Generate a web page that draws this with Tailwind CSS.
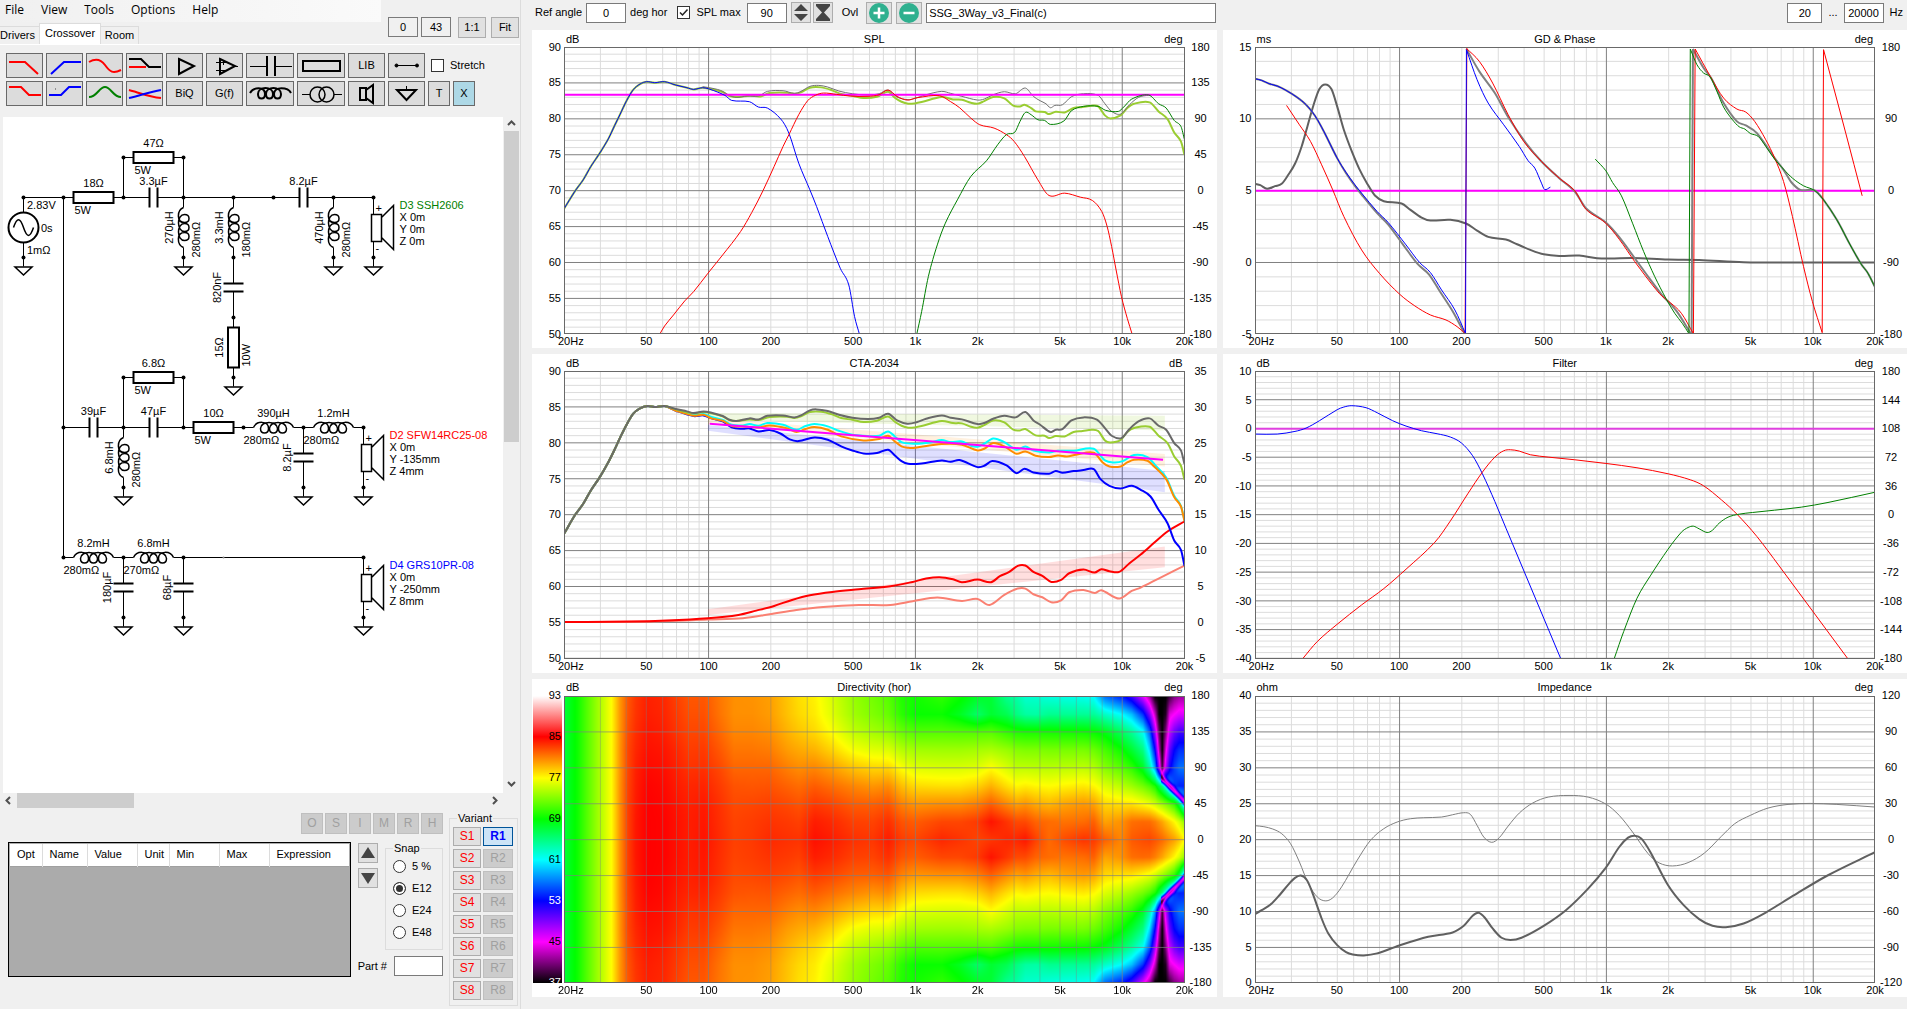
<!DOCTYPE html>
<html lang="en">
<head>
    <meta charset="UTF-8">
    <meta name="viewport" content="width=device-width, initial-scale=1.0">
    <title>Crossover designer</title>
    <script src="https://cdn.jsdelivr.net/npm/@tailwindcss/browser@4"></script>
</head>
<body class="flex h-screen overflow-hidden bg-[#f0f0f0] font-['Liberation_Sans',sans-serif] text-[11px] leading-[13px] text-black">

    <!-- Left panel: menu, schematic editor, part list -->
    <aside class="flex w-[521px] shrink-0 flex-col border-r border-[#dcdcdc]">
        <div class="flex h-11 shrink-0 justify-between">
            <div class="flex w-[381px] flex-col">
                <nav class="flex h-[22px] gap-[17px] bg-linear-to-r from-[#f0f0f0] to-[#fafafa] pt-[2px] pl-[5px] font-['Open_Sans',sans-serif] text-[12px] leading-4">
                    <a href="#">File</a>
                    <a href="#">View</a>
                    <a href="#">Tools</a>
                    <a href="#">Options</a>
                    <a href="#">Help</a>
                </nav>
                <div class="flex flex-1 items-end">
                    <button class="h-[18px] w-[39px] border-t border-[#dcdcdc] pr-1">Drivers</button>
                    <button class="h-[21px] w-[62px] border border-b-0 border-[#dcdcdc] bg-white pb-[2px]">Crossover</button>
                    <button class="h-[18px] w-[38px] border-t border-r border-[#dcdcdc]">Room</button>
                </div>
            </div>
            <div class="flex items-start gap-[3px] pt-[17px] pr-px">
                <input aria-label="X offset" value="0" class="h-5 w-[30px] border border-[#7a7a7a] bg-[#f0f0f0] text-center">
                <input aria-label="Y offset" value="43" class="h-5 w-[30px] border border-[#7a7a7a] bg-[#f0f0f0] text-center">
                <button class="ml-1 h-[21px] w-7 border border-[#adadad] bg-[#e1e1e1]">1:1</button>
                <button class="ml-[2px] h-[21px] w-7 border border-[#adadad] bg-[#e1e1e1]">Fit</button>
            </div>
        </div>

        <div class="flex shrink-0 flex-col gap-[3px] border-t border-white pt-2 pb-[11px] pl-[6px]">
            <div class="flex gap-[3px]">
                <button aria-label="Low pass" class="h-[25px] w-[37px] border border-[#696969] bg-[#dcdcdc]"><svg width="35" height="23" fill="none" stroke="red" stroke-width="2"><path d="M2 8H18L31 20"/></svg></button>
                <button aria-label="High pass" class="h-[25px] w-[37px] border border-[#696969] bg-[#dcdcdc]"><svg width="35" height="23" fill="none" stroke="#00f" stroke-width="2"><path d="M4 20L17 8H34"/></svg></button>
                <button aria-label="All pass" class="h-[25px] w-[37px] border border-[#696969] bg-[#dcdcdc]"><svg width="35" height="23" fill="none" stroke="red" stroke-width="2"><path d="M2 8C7 5 13 4 18 11S26 20 34 16"/></svg></button>
                <button aria-label="Shelf" class="h-[25px] w-[37px] border border-[#696969] bg-[#dcdcdc]"><svg width="35" height="23" fill="none" stroke-width="2"><path d="M2 13H19" stroke="red"/><path d="M2 5H14L22 13H34" stroke="#000"/></svg></button>
                <button aria-label="Buffer" class="h-[25px] w-[37px] border border-[#696969] bg-[#dcdcdc]"><svg width="35" height="23" fill="none" stroke="#000" stroke-width="2"><path d="M12 5L27 12L12 20Z"/></svg></button>
                <button aria-label="Op amp" class="h-[25px] w-[37px] border border-[#696969] bg-[#dcdcdc]"><svg width="35" height="23" fill="none" stroke="#000"><path d="M13 5L28 12L13 20Z" stroke-width="2"/><path d="M9 8.5H13M9 16.5H13M14 8.5H19M16.5 6V11M14 16.5H18M28 12.5H31"/></svg></button>
                <button aria-label="Capacitor" class="h-[25px] w-12 border border-[#696969] bg-[#dcdcdc]"><svg width="46" height="23" fill="none" stroke="#000"><path d="M3 12.5H20M28 12.5H45"/><path d="M20 2V22M28 2V22" stroke-width="2"/></svg></button>
                <button aria-label="Resistor" class="h-[25px] w-12 border border-[#696969] bg-[#dcdcdc]"><svg width="46" height="23" fill="none" stroke="#000" stroke-width="2"><path d="M5 7H42V17H5Z"/></svg></button>
                <button class="h-[25px] w-[37px] border border-[#696969] bg-[#dcdcdc]">LIB</button>
                <button aria-label="Wire" class="h-[25px] w-[37px] border border-[#696969] bg-[#dcdcdc]"><svg width="35" height="23" stroke="#000"><path d="M7 11.5H28"/><circle cx="7.5" cy="11.5" r="1.5"/><circle cx="28" cy="11.5" r="1.5"/></svg></button>
                <label class="ml-[3px] flex items-center gap-[6px]"><input type="checkbox" class="size-[13px] appearance-none border border-[#333] bg-white">Stretch</label>
            </div>
            <div class="flex gap-[3px]">
                <button aria-label="Low shelf" class="h-[25px] w-[37px] border border-[#696969] bg-[#dcdcdc]"><svg width="35" height="23" fill="none" stroke="red" stroke-width="2"><path d="M2 5H14L22 13H34"/></svg></button>
                <button aria-label="High shelf" class="h-[25px] w-[37px] border border-[#696969] bg-[#dcdcdc]"><svg width="35" height="23" fill="none" stroke="#00f" stroke-width="2"><path d="M2 13H14L22 5H34"/><path d="M8 7H9" stroke="#444" stroke-width="1"/></svg></button>
                <button aria-label="Peak" class="h-[25px] w-[37px] border border-[#696969] bg-[#dcdcdc]"><svg width="35" height="23" fill="none" stroke="green" stroke-width="2"><path d="M2 15C10 15 12 5 18 5S26 15 34 15"/></svg></button>
                <button aria-label="Crossover" class="h-[25px] w-[37px] border border-[#696969] bg-[#dcdcdc]"><svg width="35" height="23" fill="none" stroke-width="2"><path d="M2 8C10 10 22 15 34 16" stroke="red"/><path d="M2 16C12 14 22 10 34 8" stroke="#00f"/></svg></button>
                <button class="h-[25px] w-[37px] border border-[#696969] bg-[#dcdcdc]">BiQ</button>
                <button class="h-[25px] w-[37px] border border-[#696969] bg-[#dcdcdc]">G(f)</button>
                <button aria-label="Inductor" class="h-[25px] w-12 border border-[#696969] bg-[#dcdcdc]"><svg width="46" height="23" fill="none" stroke="#000" stroke-width="2"><path d="M3 11C6 5 18 4 18 12C18 18 11 18 11 12C11 4 26 4 26 12C26 18 19 18 19 12C19 4 34 4 34 12C34 18 27 18 27 12C27 4 41 5 44 11"/></svg></button>
                <button aria-label="Transformer" class="h-[25px] w-12 border border-[#696969] bg-[#dcdcdc]"><svg width="46" height="23" fill="none" stroke="#000"><path d="M4 12.5H12M36 12.5H44"/><circle cx="19.5" cy="12.5" r="7.5" stroke-width="1.5"/><circle cx="28.5" cy="12.5" r="7.5" stroke-width="1.5"/></svg></button>
                <button aria-label="Driver" class="h-[25px] w-[37px] border border-[#696969] bg-[#dcdcdc]"><svg width="35" height="23" fill="none" stroke="#000" stroke-width="2"><path d="M11 6H17V18H11ZM17 8L24 3V21L17 16"/></svg></button>
                <button aria-label="Ground" class="h-[25px] w-[37px] border border-[#696969] bg-[#dcdcdc]"><svg width="35" height="23" fill="none" stroke="#000" stroke-width="2"><path d="M8 8H27L17.500 18Z"/><path d="M17.500 4V8" stroke-width="1"/></svg></button>
                <button class="h-[25px] w-[22px] border border-[#696969] bg-[#dcdcdc]">T</button>
                <button class="h-[25px] w-[22px] border border-[#696969] bg-[#add8e6]">X</button>
            </div>
        </div>

        <!-- Schematic with scroll bars -->
        <div class="ml-[3px] flex min-h-0 flex-1">
            <div class="min-w-0 flex-1 overflow-hidden bg-white">
                <svg id="schematic" width="500" height="676" viewBox="3 117 500 676" fill="none" stroke="#000"></svg>
            </div>
            <div class="flex w-[17px] flex-col items-center">
                <svg width="15" height="14" fill="none" stroke="#505050" stroke-width="2"><path d="M4 8L7.500 4.500L11 8"/></svg>
                <div class="flex w-[15px] flex-1 flex-col"><div class="h-[48%] bg-[#cdcdcd]"></div></div>
                <svg width="15" height="14" fill="none" stroke="#505050" stroke-width="2"><path d="M4 3L7.500 6.500L11 3"/></svg>
            </div>
        </div>
        <div class="mr-[17px] flex h-[15px] shrink-0 items-center">
            <svg width="17" height="15" fill="none" stroke="#505050" stroke-width="2"><path d="M10 4L6.500 7.500L10 11"/></svg>
            <div class="h-full flex-1"><div class="h-full w-1/4 bg-[#cdcdcd]"></div></div>
            <svg width="17" height="15" fill="none" stroke="#505050" stroke-width="2"><path d="M7 4L10.500 7.500L7 11"/></svg>
        </div>

        <div class="flex h-[201px] shrink-0 pl-2">
            <div class="flex w-[435px] flex-col">
                <div class="flex justify-end gap-[2px] pt-[5px]">
                    <button disabled class="h-[21px] w-[22px] border border-[#bfbfbf] bg-[#ccc] text-[12px] text-[#a0a0a0]">O</button>
                    <button disabled class="h-[21px] w-[22px] border border-[#bfbfbf] bg-[#ccc] text-[12px] text-[#a0a0a0]">S</button>
                    <button disabled class="h-[21px] w-[22px] border border-[#bfbfbf] bg-[#ccc] text-[12px] text-[#a0a0a0]">I</button>
                    <button disabled class="h-[21px] w-[22px] border border-[#bfbfbf] bg-[#ccc] text-[12px] text-[#a0a0a0]">M</button>
                    <button disabled class="h-[21px] w-[22px] border border-[#bfbfbf] bg-[#ccc] text-[12px] text-[#a0a0a0]">R</button>
                    <button disabled class="h-[21px] w-[22px] border border-[#bfbfbf] bg-[#ccc] text-[12px] text-[#a0a0a0]">H</button>
                </div>
                <div class="flex pt-2">
                    <div class="h-[135px] w-[343px] border border-black bg-[#ababab] p-px">
                        <table class="w-full table-fixed bg-white">
                            <thead>
                                <tr class="h-[22px] border-b border-[#a0a0a0] text-left">
                                    <th class="w-8 border-r border-[#dcdcdc] pl-[7px] font-normal">Opt</th>
                                    <th class="w-[45px] border-r border-[#dcdcdc] pl-[7px] font-normal">Name</th>
                                    <th class="w-[50px] border-r border-[#dcdcdc] pl-[7px] font-normal">Value</th>
                                    <th class="w-8 border-r border-[#dcdcdc] pl-[7px] font-normal">Unit</th>
                                    <th class="w-[50px] border-r border-[#dcdcdc] pl-[7px] font-normal">Min</th>
                                    <th class="w-[50px] border-r border-[#dcdcdc] pl-[7px] font-normal">Max</th>
                                    <th class="pl-[7px] font-normal">Expression</th>
                                </tr>
                            </thead>
                        </table>
                    </div>
                    <div class="ml-[7px] flex flex-col gap-[5px] pt-px">
                        <button aria-label="Move up" class="flex size-5 items-center justify-center border border-[#adadad] bg-[#e1e1e1]"><svg width="14" height="12" fill="#444"><path d="M0 11L7 0L14 11Z"/></svg></button>
                        <button aria-label="Move down" class="flex size-5 items-center justify-center border border-[#adadad] bg-[#e1e1e1]"><svg width="14" height="12" fill="#444"><path d="M0 1L7 12L14 1Z"/></svg></button>
                    </div>
                    <fieldset class="ml-[7px] h-[108px] w-[58px] border border-[#dcdcdc] px-[7px]">
                        <legend class="px-px">Snap</legend>
                        <div class="flex flex-col gap-[9px] pt-[5px]">
                            <label class="flex items-center gap-[6px]"><input type="radio" name="snap" class="size-[13px] appearance-none rounded-full border border-[#333] bg-white">5 %</label>
                            <label class="flex items-center gap-[6px]"><input type="radio" name="snap" checked class="size-[13px] appearance-none rounded-full border border-[#333] bg-white checked:bg-[#333] checked:inset-ring-2 checked:inset-ring-white">E12</label>
                            <label class="flex items-center gap-[6px]"><input type="radio" name="snap" class="size-[13px] appearance-none rounded-full border border-[#333] bg-white">E24</label>
                            <label class="flex items-center gap-[6px]"><input type="radio" name="snap" class="size-[13px] appearance-none rounded-full border border-[#333] bg-white">E48</label>
                        </div>
                    </fieldset>
                </div>
                <label class="-mt-[21px] flex items-center justify-end gap-[7px]">Part # <input class="h-5 w-[49px] border border-[#7a7a7a] bg-white"></label>
            </div>
            <fieldset class="mt-1 ml-[6px] h-[194px] w-[69px] border border-[#dcdcdc] px-[3px]">
                <legend class="ml-1 px-px">Variant</legend>
                <div id="variants" class="grid grid-cols-[28px_30px] gap-x-[2px] gap-y-[3px] pt-[2px]"></div>
            </fieldset>
        </div>
    </aside>

    <!-- Right side: graph settings and the six graphs -->
    <main class="flex min-w-0 flex-1 flex-col pl-[11px]">
        <header class="flex h-[30px] shrink-0 items-center gap-1 pr-1 pb-[5px] pl-[3px]">
            <label for="angle">Ref angle</label>
            <input id="angle" value="0" class="h-5 w-10 border border-[#7a7a7a] bg-white text-center">
            <span>deg hor</span>
            <label class="ml-[6px] flex items-center gap-[6px]">
                <span class="relative flex">
                    <input type="checkbox" checked class="size-[13px] appearance-none border border-[#333] bg-white">
                    <svg class="absolute inset-0" width="13" height="13" fill="none" stroke="#222" stroke-width="1.500"><path d="M3 6.500L5.500 9L10.500 3.500"/></svg>
                </span>
                SPL max
            </label>
            <input aria-label="SPL max" value="90" class="ml-[2px] h-5 w-10 border border-[#7a7a7a] bg-white text-center">
            <div class="flex gap-[2px]">
                <button aria-label="Expand" class="flex h-[21px] w-5 items-center justify-center border border-[#adadad] bg-[#e1e1e1]"><svg width="14" height="17" fill="#444"><path d="M0 7L7 0L14 7ZM0 10L7 17L14 10Z"/></svg></button>
                <button aria-label="Compress" class="flex h-[21px] w-5 items-center justify-center border border-[#adadad] bg-[#e1e1e1]"><svg width="14" height="17" fill="#444"><path d="M0 0H14V2L8 8.500L14 15V17H0V15L6 8.500L0 2Z"/></svg></button>
            </div>
            <span class="ml-[5px]">Ovl</span>
            <button aria-label="Add overlay" class="ml-1 flex h-[22px] w-[26px] items-center justify-center border border-[#adadad] bg-[#e1e1e1]"><svg width="20" height="20"><circle cx="10" cy="10" r="10" fill="#2fb08f"/><path d="M10 4.500V15.500M4.500 10H15.500" stroke="#fff" stroke-width="2.500"/></svg></button>
            <button aria-label="Remove overlay" class="flex h-[22px] w-[26px] items-center justify-center border border-[#adadad] bg-[#e1e1e1]"><svg width="20" height="20"><circle cx="10" cy="10" r="10" fill="#2fb08f"/><path d="M4.500 10H15.500" stroke="#fff" stroke-width="2.500"/></svg></button>
            <input aria-label="Project" value="SSG_3Way_v3_Final(c)" class="h-5 w-[290px] border border-[#7a7a7a] bg-white px-[2px]">
            <div class="ml-auto flex items-center gap-[6px]">
                <input aria-label="From" value="20" class="h-5 w-[35px] border border-[#7a7a7a] bg-white text-center">
                <span>...</span>
                <input aria-label="To" value="20000" class="h-5 w-10 border border-[#7a7a7a] bg-white text-center">
                <span>Hz</span>
            </div>
        </header>
        <div id="charts" class="grid min-h-0 flex-1 grid-cols-2 grid-rows-3 gap-[6px] pb-3"></div>
    </main>

<script>
    // ---- Variant buttons ----
    const variants = document.getElementById('variants');
    for (let i = 1; i <= 8; i++) {
        variants.innerHTML += `<button class="h-[19px] border border-[#adadad] bg-[#e1e1e1] text-[12px] text-[#f00]">S${i}</button>`;
        variants.innerHTML += i === 1
            ? '<button class="h-[19px] border border-[#005499] bg-[#cce4f7] text-[12px] font-bold text-[#00f]">R1</button>'
            : `<button disabled class="h-[19px] border border-[#bfbfbf] bg-[#ccc] text-[12px] text-[#a0a0a0]">R${i}</button>`;
    }

    // ---- Schematic ----
    // Two-pin parts are 60 long; vertical ones are drawn upwards from their lower pin.
    const shapes = {
        R: '<path d="M0 0H10M50 0H60"/><path d="M10-5.500H50V5.500H10Z" stroke-width="2"/>',
        C: '<path d="M0 0H26M34 0H60"/><path d="M26-10V10M34-10V10" stroke-width="2"/>',
        L: '<path d="M0 0H10M50 0H60"/><path d="M10 0C13-7 25-7 25 1C25 7 17 7 17 1C17-7 34-7 34 1C34 7 26 7 26 1C26-7 43-7 43 1C43 7 35 7 35 1C35-7 47-7 50 0" stroke-width="1.500"/>'
    };
    const label = (x, y, text, extra = '') =>
        `<text x="${x}" y="${y}" fill="#000" stroke="none" ${extra}>${text}</text>`;

    const parts = [
        ['R', 63.5, 197.5, 0, '18Ω', '5W'],
        ['R', 123.5, 157.5, 0, '47Ω', '5W'],
        ['C', 123.5, 197.5, 0, '3.3µF'],
        ['L', 183.5, 257.5, 1, '270µH', '280mΩ'],
        ['L', 233.5, 257.5, 1, '3.3mH', '180mΩ'],
        ['C', 233.5, 317.5, 1, '820nF'],
        ['R', 233.5, 377.5, 1, '15Ω', '10W'],
        ['C', 273.5, 197.5, 0, '8.2µF'],
        ['L', 333.5, 257.5, 1, '470µH', '280mΩ'],
        ['C', 63.5, 427.5, 0, '39µF'],
        ['R', 123.5, 377.5, 0, '6.8Ω', '5W'],
        ['C', 123.5, 427.5, 0, '47µF'],
        ['L', 123.5, 487.5, 1, '6.8mH', '280mΩ'],
        ['R', 183.5, 427.5, 0, '10Ω', '5W'],
        ['L', 243.5, 427.5, 0, '390µH', '280mΩ'],
        ['L', 303.5, 427.5, 0, '1.2mH', '280mΩ'],
        ['C', 303.5, 487.5, 1, '8.2µF'],
        ['L', 63.5, 557.5, 0, '8.2mH', '280mΩ'],
        ['L', 123.5, 557.5, 0, '6.8mH', '270mΩ'],
        ['C', 123.5, 617.5, 1, '180µF'],
        ['C', 183.5, 617.5, 1, '68µF']
    ];
    const speakers = [
        [373.5, 197.5, 'green', 'D3 SSH2606', 'X 0m', 'Y 0m', 'Z 0m'],
        [363.5, 427.5, 'red', 'D2 SFW14RC25-08', 'X 0m', 'Y -135mm', 'Z 4mm'],
        [363.5, 557.5, 'blue', 'D4 GRS10PR-08', 'X 0m', 'Y -250mm', 'Z 8mm']
    ];
    const grounds = [[23.5, 257.5], [183.5, 257.5], [233.5, 377.5], [333.5, 257.5], [373.5, 257.5],
        [123.5, 487.5], [303.5, 487.5], [363.5, 487.5], [123.5, 617.5], [183.5, 617.5], [363.5, 617.5]];
    const nodes = [[23.5, 197.5], [63.5, 197.5], [123.5, 157.5], [183.5, 157.5], [123.5, 197.5], [183.5, 197.5],
        [233.5, 197.5], [273.5, 197.5], [333.5, 197.5], [373.5, 197.5], [233.5, 257.5], [233.5, 317.5],
        [63.5, 427.5], [123.5, 377.5], [183.5, 377.5], [123.5, 427.5], [183.5, 427.5], [243.5, 427.5],
        [303.5, 427.5], [363.5, 427.5], [63.5, 557.5], [123.5, 557.5], [183.5, 557.5], [363.5, 557.5]];

    let out = '<path d="M23.500 212V197.500H63.500V557.500M123.500 157.500V197.500M183.500 157.500V197.500H273.500M333.500 197.500H373.500M123.500 377.500V427.500M183.500 377.500V427.500M183.500 557.500H363.500M23.500 243V257.500"/>';
    out += '<circle cx="23.500" cy="227.500" r="15" stroke-width="2"/><path d="M13.500 227.500C17 217 20 217 23.500 227.500S30 238 33.500 227.500" stroke-width="1.500"/>';
    out += label(27, 209, '2.83V') + label(41, 232, '0s') + label(27, 254, '1mΩ');
    out += '<circle cx="223.500" cy="557.500" r="1" fill="#888" stroke="none"/>';
    for (const [type, x, y, vertical, name, sub] of parts) {
        out += `<g transform="translate(${x} ${y})${vertical ? ' rotate(-90)' : ''}">${shapes[type]}`;
        out += label(30, type === 'C' ? -13 : -11, name, 'text-anchor="middle"');
        if (sub) out += label(type === 'L' ? 0 : 11, 16, sub);
        out += '</g>';
    }
    for (const [x, y, color, name, ...pos] of speakers) {
        out += `<g transform="translate(${x} ${y})"><path d="M0 0V17M0 44V60"/>
            <path d="M-2 17H8V44H-2ZM8 20L20 8V52L8 40" stroke-width="1.500"/>
            <text x="26" y="11" fill="${color}" stroke="none">${name}</text>`;
        pos.forEach((text, i) => out += label(26, 23 + 12 * i, text));
        out += label(2, 14, '+') + label(2, 54, '-') + '</g>';
    }
    for (const [x, y] of grounds) {
        out += `<g transform="translate(${x} ${y})"><path d="M0 0V9"/><path d="M-8.500 9.500H8.500L0 17.500Z" stroke-width="1.500"/></g>`;
        nodes.push([x, y]);
    }
    for (const [x, y] of nodes) out += `<circle cx="${x}" cy="${y}" r="2" fill="#000" stroke="none"/>`;
    document.getElementById('schematic').innerHTML = out;

    // ---- Charts ----
    // Curve points are in the units of each chart's view box: [x, y, width, height].
    const bass = '100,627 125,573 143,540 160,500 180,460 200,415 213,378 225,345 240,303 255,270 270,253 285,246 303,249 325,246 350,256 375,264 390,269 410,264 ';
    const bass2 = '100,552 125,495 143,462 160,422 180,382 200,335 213,300 225,265 240,225 255,192 270,176 287,169 303,172 325,169 ';
    const treble = ' 1360,572 1380,600 1410,660 1440,735 1465,793 1480,820 1497,865';
    const charts = [
        {
            title: 'SPL', left: 'dB', right: 'deg', view: [100, 142, 1388, 861],
            y: [90, 85, 80, 75, 70, 65, 60, 55, 50], y2: [180, 135, 90, 45, 0, -45, -90, -135, -180],
            curves: [
                ['#9acd32', 2, bass + '425,267 455,277 470,289 490,292 515,288 540,290 560,280 600,279 615,282 630,278 650,264 675,263 700,272 720,283 745,288 770,295 800,291 825,276 840,294 855,306 870,312 885,311 900,307 945,292 970,299 990,300 1010,309 1025,312 1040,304 1060,292 1085,296 1105,318 1120,320 1130,315 1145,325 1155,335 1175,337 1185,343 1200,336 1220,338 1240,325 1260,322 1280,318 1295,320 1310,347 1322,356 1345,347 1360,325 1375,312 1410,308 1430,335 1450,358 1465,398 1480,425 1488,465'],
                ['#707070', 1, '410,261 425,264 450,272 470,287 485,293 510,289 535,289 555,275 590,273 615,281 630,275 650,260 670,257 690,262 715,274 745,282 780,286 805,282 825,271 845,292 870,300 885,296 910,285 945,275 965,281 990,290 1025,301 1040,298 1060,285 1085,276 1110,282 1132,265 1150,290 1165,303 1178,312 1188,324 1198,317 1215,315 1235,291 1262,282 1295,287 1310,312 1325,335 1345,343 1365,315 1385,293 1408,286'],
                ['#ff00ff', 2, '100,285 1488,285'],
                ['#0000ff', 1, bass + '425,268 460,287 475,302 515,306 535,322 555,325 585,358 603,400 625,490 650,570 665,620 690,710 718,805 737,855 750,950 761,1003'],
                ['#ff0000', 1, '314,1003 325,978 345,945 370,903 390,875 422,820 455,765 495,695 520,638 545,573 570,500 590,440 603,405 625,345 645,303 662,287 680,280 710,284 740,289 780,290 805,285 825,271 845,290 868,301 890,294 940,288 965,306 985,324 1010,355 1030,375 1062,385 1090,405 1107,425 1130,470 1160,540 1185,587 1220,580 1255,592 1282,602 1303,635 1315,680 1325,740 1335,810 1347,890 1360,955 1371,1003'],
                ['#008000', 1, '889,1003 900,935 915,830 935,735 953,670 980,600 1010,530 1045,483 1070,435 1090,404 1108,398 1120,365 1132,338 1145,345 1160,360 1175,362 1188,374 1218,364 1235,333 1262,320 1295,320 1312,332 1340,335 1352,322 1370,298 1408,286 1430,312 1447,325 1465,362 1480,380 1488,420']
            ]
        },
        {
            title: 'GD &amp; Phase', left: 'ms', right: 'deg', view: [100, 142, 1397, 861],
            y: [15, 10, 5, 0, -5], y2: [180, 90, 0, -90, -180],
            curves: [
                ['#ff00ff', 2, '100,573 1497,573'],
                ['#606060', 2, '100,552 112,556 127,567 145,559 160,552 175,525 190,492 205,440 218,380 232,315 245,268 258,254 272,268 285,320 300,390 318,455 335,508 352,550 370,587 390,604 430,611 450,630 475,653 495,662 540,660 575,671 600,692 625,711 665,719 690,733 720,750 750,763 785,768 830,767 870,775 900,776 950,774 1030,779 1100,780 1200,787 1350,788 1497,788'],
                ['#808080', 2, '100,237 115,242 132,252 150,259 170,272 195,293 215,315 235,348 255,395 285,475 305,520 325,558 340,584 375,640 400,674 435,737 466,792 492,824 516,874 546,936 572,1001'],
                ['#808080', 2, '576,148 605,215 640,280 670,352 710,430 745,485 785,535 820,575 845,625 890,668 920,712 955,775 985,830 1015,883 1050,935 1081,1001'],
                ['#808080', 2, '1083,1001 1086,148'],
                ['#808080', 2, '1086,148 1110,205 1127,235 1155,310 1185,365 1205,377 1230,400 1270,475 1290,510 1308,548 1328,570' + treble],
                ['#ff0000', 1, '171,317 200,375 225,425 250,495 275,570 300,650 340,750 380,820 425,882 460,918 495,945 530,960 555,980 573,1000'],
                ['#ff0000', 1, '573,1000 577,146'],
                ['#ff0000', 1, '576,146 605,185 635,250 670,345 705,425 745,485 785,535 820,573 845,628 888,668 920,718 955,785 1010,880 1035,908 1060,940 1087,1001'],
                ['#ff0000', 1, '1087,1001 1091,148'],
                ['#ff0000', 1, '1091,148 1125,230 1155,295 1185,328 1205,337 1225,365 1250,420 1270,475 1290,545 1310,650 1335,800 1355,905 1377,998'],
                ['#ff0000', 1, '1377,998 1380,150'],
                ['#ff0000', 1, '1380,150 1400,250 1430,400 1467,588'],
                ['#0000ff', 1, '100,237 115,242 132,252 150,259 170,272 195,293 215,315 235,348 255,395 285,475 305,518 325,555 340,580 375,635 400,668 440,735 470,787 495,818 520,870 550,930 574,1001'],
                ['#0000ff', 1, '574,1001 576,150'],
                ['#0000ff', 1, '576,150 600,240 625,310 660,375 695,440 715,483 730,505 745,550 752,569 765,562'],
                ['#008000', 1, '866,478 890,513 905,548 925,588 950,670 975,755 1000,830 1025,895 1045,940 1062,970 1077,1001'],
                ['#008000', 1, '1077,1001 1080,148'],
                ['#008000', 1, '1080,148 1095,195 1110,220 1125,232 1140,275 1155,322 1175,360 1190,381 1203,388 1215,401 1233,410 1250,440 1270,478 1290,508 1310,535 1335,558' + treble]
            ]
        },
        {
            title: 'CTA-2034', left: 'dB', right: 'dB', view: [100, 64, 1388, 861],
            y: [90, 85, 80, 75, 70, 65, 60, 55, 50], y2: [35, 30, 25, 20, 15, 10, 5, 0, -5],
            bands: [
                ['#9acd3226', '422,190 1444,198 1444,242 422,210'],
                ['#ff8c0020', '422,205 1444,313 1444,350 422,222'],
                ['#0000ff20', '422,226 1444,364 1444,427 422,243'],
                ['#ff000020', '422,778 1444,590 1444,652 422,795']
            ],
            curves: [
                ['#fa8072', 2, '100,816 300,815 422,809 500,805 560,793 620,780 680,771 760,765 830,765 880,754 935,743 990,753 1025,747 1052,765 1085,735 1115,716 1132,716 1150,733 1170,742 1190,757 1212,751 1230,727 1262,720 1287,729 1302,721 1342,746 1370,723 1390,713 1430,686 1488,647'],
                ['#ff0000', 2, '100,816 250,815 330,812 422,805 490,795 530,782 570,768 610,750 650,736 700,726 760,718 830,709 880,696 910,686 940,682 970,688 990,697 1025,689 1055,697 1075,679 1095,667 1115,648 1132,647 1150,666 1170,678 1190,696 1212,690 1230,670 1262,659 1287,668 1302,658 1320,664 1342,666 1365,640 1390,614 1420,579 1450,545 1488,515'],
                ['#0000ff', 2, bass2 + '350,183 390,199 412,197 430,206 455,215 475,233 500,237 515,236 535,245 560,241 585,252 605,269 625,274 660,263 690,270 720,290 745,302 770,311 800,310 825,300 840,317 855,334 870,342 900,341 945,332 965,336 985,331 1025,352 1040,348 1058,334 1090,347 1112,370 1130,357 1150,368 1185,372 1200,364 1215,369 1240,364 1262,361 1285,358 1300,388 1320,408 1345,416 1370,408 1390,420 1412,440 1430,480 1450,520 1465,572 1480,600 1488,648'],
                ['#00ffff', 2, bass2 + '350,181 390,196 412,193 430,202 455,211 475,225 500,227 515,223 535,228 555,220 590,225 620,240 640,229 660,223 690,230 715,243 745,255 770,258 805,258 825,245 840,260 855,277 885,282 920,278 945,271 965,277 990,275 1010,288 1025,291 1040,282 1060,266 1085,277 1112,300 1132,290 1150,302 1185,308 1205,303 1240,303 1285,297 1310,332 1330,338 1350,334 1375,316 1405,322 1425,350 1447,383 1465,438 1480,468 1488,512'],
                ['#ff8c00', 2, bass2 + '350,183 390,198 412,195 430,206 455,213 475,229 500,230 535,233 560,227 600,236 620,247 640,238 660,232 690,240 720,260 770,272 805,268 825,258 840,275 855,290 870,294 885,294 945,283 990,285 1025,302 1040,297 1060,280 1085,290 1112,312 1132,305 1155,318 1185,322 1205,317 1225,320 1245,315 1285,309 1305,338 1320,350 1345,350 1360,338 1375,330 1405,333 1420,350 1447,388 1465,442 1480,470 1488,514'],
                ['#9acd32', 2, bass2 + '350,179 390,191 412,187 430,191 455,200 470,211 485,214 515,209 535,211 560,202 600,201 615,205 630,200 650,187 675,186 700,194 720,205 745,210 770,217 800,213 825,200 840,216 855,228 870,234 885,233 900,229 945,214 970,220 990,221 1010,231 1025,234 1040,226 1060,212 1085,218 1105,240 1120,242 1132,238 1155,257 1175,258 1185,265 1200,259 1220,260 1240,247 1260,244 1280,240 1295,244 1310,272 1322,278 1345,271 1360,247 1375,235 1410,231 1430,258 1450,280 1465,320 1480,348 1488,390'],
                ['#696969', 2, bass2 + '350,178 375,185 390,190 412,185 430,189 455,199 470,210 485,214 515,206 535,209 555,198 590,197 615,203 630,197 650,182 665,179 690,184 715,195 745,204 780,208 805,204 825,192 845,212 868,222 890,217 910,207 945,197 965,204 990,209 1025,223 1040,220 1060,207 1085,198 1110,203 1132,187 1150,212 1165,225 1188,247 1200,240 1215,238 1235,212 1262,203 1292,210 1310,235 1325,258 1347,265 1365,238 1385,215 1410,206 1430,228 1447,240 1465,280 1480,302 1488,343'],
                ['#ff00ff', 2, '426,222 1440,330']
            ]
        },
        {
            title: 'Filter', left: 'dB', right: 'deg', view: [100, 64, 1397, 861],
            y: [10, 5, 0, -5, -10, -15, -20, -25, -30, -35, -40], y2: [180, 144, 108, 72, 36, 0, -36, -72, -108, -144, -180],
            curves: [
                ['#e040e0', 2, '100,237 1497,237'],
                ['#0000ff', 1, '100,253 150,253 190,245 215,235 245,213 285,180 300,172 318,168 350,174 375,189 410,213 440,229 475,243 510,252 540,262 565,280 590,318 612,372 640,455 665,535 788,925'],
                ['#ff0000', 1, '208,925 240,875 285,823 340,765 390,716 440,658 505,577 540,513 580,430 612,367 640,322 660,303 675,300 695,304 720,315 760,322 820,330 890,341 960,354 1030,372 1080,390 1110,408 1150,450 1185,493 1230,560 1280,648 1434,925'],
                ['#008000', 1, '909,925 930,845 960,745 990,678 1030,598 1060,547 1075,533 1087,529 1100,537 1118,548 1130,541 1145,520 1165,502 1190,493 1220,488 1270,481 1330,472 1390,458 1497,427']
            ]
        },
        {
            title: 'Directivity (hor)', left: 'dB', right: 'deg', view: [100, 76, 1388, 864], heat: true,
            y: [93, 85, 77, 69, 61, 53, 45, 37], y2: [180, 135, 90, 45, 0, -45, -90, -135, -180],
            curves: []
        },
        {
            title: 'Impedance', left: 'ohm', right: 'deg', view: [100, 76, 1397, 864],
            y: [40, 35, 30, 25, 20, 15, 10, 5, 0], y2: [120, 90, 60, 30, 0, -30, -60, -90, -120],
            curves: [
                ['#808080', 1, '100,466 120,469 140,476 160,490 180,520 200,575 220,640 240,680 258,692 275,683 295,650 330,570 360,510 390,475 420,455 450,445 480,442 520,440 545,433 570,427 585,432 600,465 615,500 633,516 650,502 670,467 695,428 725,398 760,380 807,375 850,380 890,401 920,435 950,485 985,550 1010,578 1040,587 1075,577 1112,548 1150,498 1180,460 1215,435 1255,413 1300,402 1350,399 1410,402 1497,410'],
                ['#606060', 2, '100,732 115,720 135,703 155,675 175,643 190,623 203,616 217,630 230,670 250,745 265,790 285,825 305,846 320,853 345,856 375,850 425,826 490,800 545,787 570,767 590,737 603,728 617,742 635,775 655,803 675,810 700,803 750,767 800,720 850,655 890,592 920,530 940,502 955,496 970,505 990,545 1030,645 1065,705 1100,747 1130,767 1160,771 1200,760 1250,727 1310,678 1390,615 1497,545']
            ]
        }
    ];

    // Catmull-Rom spline through the points
    function smooth(str) {
        const p = str.trim().split(/\s+/).map(s => s.split(',').map(Number));
        let d = `M${p[0]}`;
        for (let i = 0; i < p.length - 1; i++) {
            const a = p[i - 1] || p[i], b = p[i], c = p[i + 1], e = p[i + 2] || c;
            const h = (c[0] - b[0]) / 3;
            const m1 = c[0] !== a[0] ? (c[1] - a[1]) / (c[0] - a[0]) : 0;
            const m2 = e[0] !== b[0] ? (e[1] - b[1]) / (e[0] - b[0]) : 0;
            d += `C${b[0] + h} ${b[1] + m1 * h} ${c[0] - h} ${c[1] - m2 * h} ${c}`;
        }
        return d;
    }

    const logPos = f => Math.log10(f / 20) / 3;
    const freqs = [[50, '50'], [100, '100'], [200, '200'], [500, '500'], [1000, '1k'], [2000, '2k'], [5000, '5k'], [10000, '10k'], [20000, '20k']];

    function gridLines(chart) {
        const [x0, y0, w, h] = chart.view;
        const rows = chart.heat ? chart.y2.length - 1 : chart.y.length - 1;
        let minor = '', major = '';
        for (let decade = 10; decade <= 10000; decade *= 10) {
            for (let n = 1; n < 10; n++) {
                const f = n * decade;
                if (f <= 20 || f >= 20000) continue;
                const line = `M${x0 + logPos(f) * w} ${y0}v${h}`;
                if (n === 1) major += line; else minor += line;
            }
        }
        for (let i = 0; i <= rows * 5; i++) {
            const line = `M${x0} ${y0 + i * h / rows / 5}h${w}`;
            if (i % 5 === 0) major += line; else if (!chart.heat) minor += line;
        }
        const style = 'fill="none" shape-rendering="crispEdges" vector-effect="non-scaling-stroke"';
        return `<path d="${minor}" stroke="${chart.heat ? '#80808066' : '#dcdcdc'}" ${style}/>
            <path d="${major}" stroke="${chart.heat ? '#808080b0' : '#808080'}" ${style}/>`;
    }

    const root = document.getElementById('charts');
    for (const chart of charts) {
        let svg = gridLines(chart);
        for (const [color, pts] of chart.bands || []) svg += `<polygon points="${pts}" fill="${color}"/>`;
        for (const [color, width, pts] of chart.curves) {
            svg += `<path d="${smooth(pts)}" fill="none" stroke="${color}" stroke-width="${width}" vector-effect="non-scaling-stroke"/>`;
        }
        const tick = t => `<span class="flex h-0 items-center ${chart.heat && (t === 53 || t === 37) ? 'text-white' : ''}">${t}</span>`;
        root.innerHTML += `
            <section class="grid min-h-0 min-w-0 grid-cols-[32px_1fr_32px] grid-rows-[17px_1fr_14px] bg-white">
                <div></div>
                <div class="grid grid-cols-3 items-center px-[2px] pt-px">
                    <span>${chart.left}</span><h2 class="text-center">${chart.title}</h2><span class="text-right">${chart.right}</span>
                </div>
                <div></div>
                <div class="${chart.heat
                    ? 'mr-[2px] ml-px flex flex-col items-end justify-between bg-[linear-gradient(#fff,#f00_14.2%,#ff0_28.6%,#0f0_42.9%,#0ff_57.1%,#00f_71.4%,#f0f_85.7%,#000)] pr-px'
                    : 'flex flex-col items-end justify-between pr-[3px]'}">${chart.y.map(tick).join('')}</div>
                <div class="relative min-h-0 min-w-0">
                    ${chart.heat ? '<canvas id="heat" width="620" height="288" class="absolute inset-0 h-full w-full"></canvas>' : ''}
                    <svg class="absolute inset-0 h-full w-full" viewBox="${chart.view.join(' ')}" preserveAspectRatio="none">${svg}</svg>
                    <div class="absolute inset-0 border border-[#696969]"></div>
                </div>
                <div class="flex flex-col items-center justify-between">${chart.y2.map(t => `<span class="flex h-0 items-center">${t}</span>`).join('')}</div>
                <div></div>
                <div class="relative">
                    <span class="absolute top-px -left-[6px]">20Hz</span>
                    ${freqs.map(([f, t]) => `<span class="absolute top-px -translate-x-1/2" style="left:${logPos(f) * 100}%">${t}</span>`).join('')}
                </div>
                <div></div>
            </section>`;
    }

    // ---- Directivity map ----
    // Level in dB per column at 0, 22.5, 45 ... 180 degrees off axis
    const levels = [
        [100, 67.3, 67.3, 67.3, 67.3, 67.3, 67.3, 67.3, 67.3, 67.3],
        [130, 69.5, 69.5, 69.5, 69.5, 69.5, 69.5, 69.5, 69.5, 69.5],
        [150, 71.6, 71.6, 71.6, 71.6, 71.6, 71.6, 71.6, 71.6, 71.6],
        [180, 74.5, 74.5, 74.5, 74.5, 74.5, 74.5, 74.5, 74.5, 74.5],
        [205, 77, 77, 77, 77, 77, 77, 77, 77, 77],
        [224, 80.4, 80.4, 80.4, 80.4, 80.3, 80.3, 80.2, 80.2, 80.2],
        [242, 83, 83, 83, 82.9, 82.8, 82.8, 82.6, 82.4, 82.3],
        [260, 84.3, 84.3, 84.2, 84.1, 84, 83.8, 83.6, 83.4, 83.3],
        [285, 85, 85, 85, 84.9, 84.7, 84.5, 84.3, 84.1, 84],
        [325, 84.9, 84.9, 84.8, 84.7, 84.5, 84.3, 84, 83.8, 83.7],
        [350, 84.5, 84.5, 84.4, 84.2, 84, 83.8, 83.4, 83.2, 83],
        [380, 84.1, 84.1, 84, 83.8, 83.4, 83.1, 82.8, 82.5, 82.3],
        [412, 84.4, 84.3, 84.2, 83.9, 83.5, 83.2, 82.8, 82.5, 82.3],
        [450, 83.6, 83.5, 83.4, 83.1, 82.7, 82.2, 81.7, 81.3, 81.2],
        [480, 83, 82.9, 82.7, 82.4, 81.8, 81.3, 80.8, 80.5, 80.5],
        [520, 83.2, 83.1, 82.8, 82.3, 81.8, 81.3, 80.8, 80.5, 80.4],
        [560, 83.7, 83.4, 83, 82.4, 81.8, 81.1, 80.5, 80.1, 80],
        [600, 83.5, 83.2, 82.7, 81.9, 81, 80.1, 79.4, 78.9, 78.8],
        [625, 83.4, 83, 82.4, 81.6, 80.6, 79.7, 78.8, 78.2, 78],
        [660, 84.5, 84.1, 83.2, 82.1, 80.8, 79.4, 78.2, 77.6, 77.4],
        [700, 84.1, 83.7, 82.8, 81.5, 80, 78.3, 76.9, 76, 75.7],
        [745, 83.5, 83, 82.1, 80.8, 78.9, 76.8, 75.1, 74.1, 73.8],
        [790, 83.3, 82.9, 82, 80.3, 78.3, 76.1, 74.2, 73, 72.6],
        [825, 84.1, 83.5, 82.3, 80.6, 78.3, 75.9, 73.6, 72.2, 71.7],
        [855, 83.1, 82.4, 80.9, 79, 76.9, 74.7, 72.3, 70.3, 70],
        [885, 82.8, 82.1, 80.3, 78.1, 76, 74.1, 71.6, 69.2, 69.5],
        [945, 83.8, 82.8, 80.5, 77.9, 75.8, 74, 71.7, 69.3, 70.5],
        [985, 83.4, 82.8, 80.5, 77.9, 75.8, 74, 71.6, 68, 69.3],
        [1025, 82.9, 83.2, 81, 78.4, 76, 74.2, 71.6, 65.8, 67.8],
        [1055, 83.3, 84.4, 82, 79.4, 77, 74.4, 71.7, 67.5, 67.4],
        [1090, 83.8, 83.4, 80.7, 78, 75.8, 73.8, 70.6, 66.5, 64.5],
        [1112, 83.8, 82.7, 79.9, 77.2, 75, 73.2, 70, 65, 63.8],
        [1132, 84.3, 82.7, 80.3, 77.5, 75, 73, 69.8, 64, 62.5],
        [1155, 83, 81.9, 79.6, 77.2, 74.9, 73, 69.8, 63.8, 62.5],
        [1185, 81.7, 81.6, 79.2, 77, 74.8, 72.8, 69.7, 64.5, 62],
        [1218, 82.6, 81.4, 79.8, 77.3, 74.9, 72.8, 69.6, 64.4, 61.8],
        [1262, 83.4, 81.6, 80.2, 77.6, 75, 72.8, 69.5, 64.3, 61.5],
        [1285, 83.2, 82, 79.9, 77.2, 74.7, 72.4, 69.2, 64.2, 61],
        [1310, 82, 79.9, 78.2, 75.9, 73.2, 71.2, 68.4, 62.8, 56.5],
        [1347, 80.8, 80.4, 77.9, 74.8, 71.8, 69.4, 66.2, 61, 54],
        [1370, 82.2, 81.5, 77.8, 73.9, 70.5, 67.5, 64.3, 59, 51],
        [1395, 82.6, 81.7, 77, 72.6, 68, 65, 61.5, 54.5, 46],
        [1410, 82.8, 81.6, 76.4, 71.4, 64, 60, 56, 49, 42],
        [1422, 82.4, 81, 75.5, 69.8, 58, 53, 48, 43, 37],
        [1431, 82, 80.3, 74.5, 67, 48, 43, 40, 37, 37],
        [1438, 81.7, 79.8, 73.9, 65, 39, 37, 37, 37, 37],
        [1446, 81.2, 79, 73, 62, 47, 44, 41, 38, 37],
        [1455, 80.6, 78.2, 71.9, 58, 52.5, 50, 47, 44, 39],
        [1465, 80, 77.2, 70.5, 55, 55, 53, 49.5, 45, 41],
        [1476, 79, 75.8, 67, 54, 56.5, 54.5, 51, 46, 42],
        [1488, 77.2, 73.5, 60, 54, 56.8, 54.5, 51, 46, 42]
    ];
    const scale = [[0, 0, 0], [255, 0, 255], [0, 0, 255], [0, 255, 255], [0, 255, 0], [255, 255, 0], [255, 0, 0], [255, 255, 255]];
    const canvas = document.getElementById('heat');
    const ctx = canvas.getContext('2d');
    const img = ctx.createImageData(canvas.width, canvas.height);
    for (let px = 0; px < canvas.width; px++) {
        const x = 100 + px / (canvas.width - 1) * 1388;
        let c = 0;
        while (c < levels.length - 2 && levels[c + 1][0] < x) c++;
        const t = (x - levels[c][0]) / (levels[c + 1][0] - levels[c][0]);
        for (let py = 0; py < canvas.height; py++) {
            const a = Math.min(Math.abs(py / (canvas.height - 1) - 0.5) * 16, 7.999);
            const i = Math.floor(a) + 1, u = a - Math.floor(a);
            const at = k => levels[k][i] * (1 - u) + levels[k][i + 1] * u;
            let level = at(c) * (1 - t) + at(c + 1) * t;
            // narrow null that runs from 78 degrees down to 48 degrees at the top of the band
            if (x > 1436) {
                const off = (a * 22.5 - 78 + (x - 1436) * 0.58) / 5;
                level -= 15 * Math.exp(-off * off);
            }
            const s = Math.min(Math.max((level - 37) / 8, 0), 6.999);
            const lo = scale[Math.floor(s)], hi = scale[Math.floor(s) + 1], v = s - Math.floor(s);
            const o = (py * canvas.width + px) * 4;
            for (let k = 0; k < 3; k++) img.data[o + k] = lo[k] + (hi[k] - lo[k]) * v;
            img.data[o + 3] = 255;
        }
    }
    ctx.putImageData(img, 0, 0);
</script>
</body>
</html>
